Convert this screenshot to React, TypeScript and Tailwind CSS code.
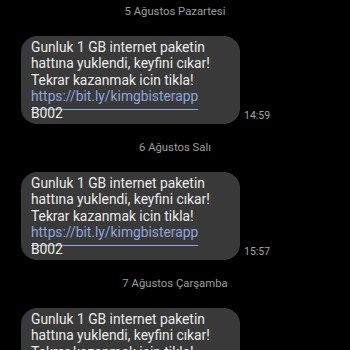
import React from 'react';

const DAYS = [
    { date: '5 Ağustos Pazartesi', time: '14:59' },
    { date: '6 Ağustos Salı', time: '15:57' },
    { date: '7 Ağustos Çarşamba', time: '' },
];

const Message: React.FC<{ time: string }> = ({ time }) => (
    <div className="flex items-end ml-[21px]">
        <div className="w-[219px] rounded-[16px] bg-[#393939] pl-[10px] pr-2 pt-[3px] pb-[3px] text-[13.8px] leading-[16.4px] text-[#ececec]">
            <div>Gunluk 1 GB internet paketin</div>
            <div>hattına yuklendi, keyfini cıkar!</div>
            <div>Tekrar kazanmak icin tikla!</div>
            <div className="text-[#8ea6dc] underline decoration-[#8ea6dc] decoration-1 underline-offset-[8px]">https://bit.ly/kimgbisterapp</div>
            <div>B002</div>
        </div>
        {time && <span className="ml-[4px] mb-[1px] text-[10.5px] leading-[14px] text-[#a3a3a3]">{time}</span>}
    </div>
);

export default function App() {
    return (
        <div className="w-[350px] h-[350px] overflow-hidden bg-black font-['Roboto',sans-serif]">
            {DAYS.map((d, i) => (
                <div key={i} className="flex flex-col">
                    <div className={`${i > 0 ? 'mt-[12px]' : ''} h-[24px] flex items-center justify-center text-[11.3px] text-[#9d9d9d]`}>
                        {d.date}
                    </div>
                    <div className="mt-[12px]">
                        <Message time={d.time} />
                    </div>
                </div>
            ))}
        </div>
    );
}
